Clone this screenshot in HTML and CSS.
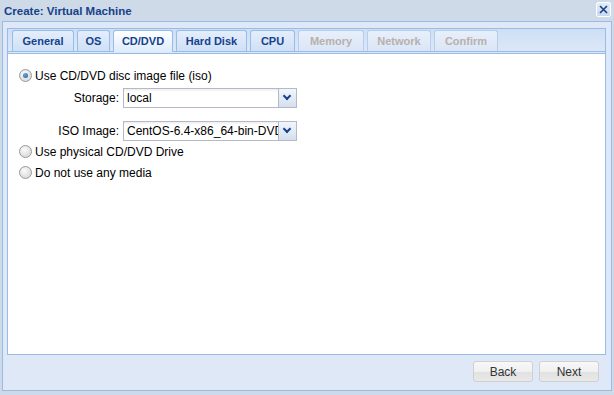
FILE: index.html
```html
<!DOCTYPE html>
<html lang="en">
<head>
    <meta charset="UTF-8">
    <title>Create: Virtual Machine</title>
    <link rel="stylesheet" href="styles.css">
</head>
<body>
    <div class="window">
        <div class="win-header">
            <span class="win-title">Create: Virtual Machine</span>
            <span class="tool-close">
                <svg width="13" height="13" viewBox="0 0 13 13">
                    <path d="M3 3 L10 10 M10 3 L3 10" stroke="#15428b" stroke-width="1.6" fill="none"/>
                </svg>
            </span>
        </div>

        <div class="win-body">
            <div class="tabpanel">
                <div class="tab-bar">
                    <div class="tab tab-general">General</div>
                    <div class="tab tab-os">OS</div>
                    <div class="tab tab-cd active">CD/DVD</div>
                    <div class="tab tab-disk">Hard Disk</div>
                    <div class="tab tab-cpu">CPU</div>
                    <div class="tab tab-mem disabled">Memory</div>
                    <div class="tab tab-net disabled">Network</div>
                    <div class="tab tab-confirm disabled">Confirm</div>
                </div>

                <div class="tab-body">
                    <div class="radio-row">
                        <span class="radio checked"></span>
                        <span>Use CD/DVD disc image file (iso)</span>
                    </div>
                    <div class="field-row">
                        <label>Storage:</label>
                        <div class="combo">
                            <span class="combo-text">local</span>
                            <span class="trigger"></span>
                        </div>
                    </div>
                    <div class="field-row">
                        <label>ISO Image:</label>
                        <div class="combo">
                            <span class="combo-text">CentOS-6.4-x86_64-bin-DVD1.iso</span>
                            <span class="trigger"></span>
                        </div>
                    </div>
                    <div class="radio-row">
                        <span class="radio"></span>
                        <span>Use physical CD/DVD Drive</span>
                    </div>
                    <div class="radio-row">
                        <span class="radio"></span>
                        <span>Do not use any media</span>
                    </div>
                </div>
            </div>

            <div class="toolbar">
                <button class="btn">Back</button>
                <button class="btn">Next</button>
            </div>
        </div>
    </div>
</body>
</html>
```

FILE: styles.css
```css
body {
    margin: 0;
    padding: 0;
    background-color: #cfdae8;
    font-family: "Liberation Sans", Arial, sans-serif;
    font-size: 12px;
    color: #000;
}

.window {
    width: 614px;
    height: 395px;
    background-color: #cfdae8;
}

.win-header {
    height: 21px;
    display: flex;
    align-items: center;
    justify-content: space-between;
    padding: 0 3px 0 4px;
}

.win-title {
    font-weight: bold;
    font-size: 11.5px;
    color: #15428b;
    margin-top: 1px;
}

.tool-close {
    width: 13px;
    height: 13px;
    border: 1px solid #fff;
    border-radius: 2px;
    background: linear-gradient(#e4ecf7, #c9d9ef);
    display: flex;
    margin-top: -2px;
}

.win-body {
    margin-left: 2px;
    width: 610px;
    height: 370px;
    box-sizing: border-box;
    border: 1px solid #99bbe8;
    background-color: #dfe8f6;
    padding: 6px 4px 0 4px;
}

.tabpanel {
    width: 599px;
}

.tab-bar {
    height: 26px;
    box-sizing: border-box;
    border: 1px solid #99bbe8;
    background: linear-gradient(#cedff5, #dce8f8);
    display: flex;
    align-items: flex-end;
    gap: 3px;
    padding: 2px 4px;
    position: relative;
}

.tab-bar::after {
    content: "";
    position: absolute;
    left: 0;
    right: 0;
    bottom: 1px;
    height: 1px;
    background: #99bbe8;
}

.tab {
    height: 21px;
    box-sizing: border-box;
    border: 1px solid #99bbe8;
    border-bottom: none;
    border-radius: 3px 3px 0 0;
    background: linear-gradient(#e4eefb, #cfe0f6);
    font-weight: bold;
    font-size: 11px;
    color: #15428b;
    padding-top: 4px;
    text-align: center;
    position: relative;
    z-index: 1;
}

.tab-general { width: 62px; }
.tab-os { width: 33px; }
.tab-cd { width: 60px; }
.tab-disk { width: 71px; }
.tab-cpu { width: 45px; }
.tab-mem { width: 66px; }
.tab-net { width: 64px; }
.tab-confirm { width: 64px; }

.tab.active {
    background: linear-gradient(#ffffff, #deecfd);
    height: 22px;
    margin-bottom: -1px;
}

.tab.disabled {
    color: #b8b0ad;
    background: linear-gradient(#e8effa, #dae6f6);
    border-color: #b8cceb;
}

.tab-body {
    height: 301px;
    box-sizing: border-box;
    border: 1px solid #99bbe8;
    border-top: none;
    background: #fff;
    padding: 11px 0 0 11px;
}

.radio-row {
    display: flex;
    align-items: center;
    height: 21px;
    gap: 3px;
}

.radio {
    width: 11px;
    height: 11px;
    border-radius: 50%;
    border: 1px solid #9a9a9a;
    background: radial-gradient(circle at 40% 35%, #fbfbfb, #cfcfcf);
    display: inline-block;
    position: relative;
}

.radio.checked::after {
    content: "";
    position: absolute;
    left: 3px;
    top: 3px;
    width: 5px;
    height: 5px;
    border-radius: 50%;
    background: radial-gradient(circle at 40% 35%, #6ea6d8, #1c5a9a);
}

.field-row {
    display: flex;
    align-items: center;
    height: 20px;
    margin: 2px 0;
}

.field-row + .field-row {
    margin: 13px 0 0 0;
}

.field-row label {
    width: 100px;
    text-align: right;
    padding-right: 4px;
}

.combo {
    width: 174px;
    height: 20px;
    box-sizing: border-box;
    border: 1px solid #b5b8c8;
    background: linear-gradient(#eeeeee, #ffffff 3px);
    display: flex;
    align-items: center;
}

.combo-text {
    flex: 1;
    min-width: 0;
    overflow: hidden;
    white-space: nowrap;
    padding-left: 3px;
}

.trigger {
    flex: none;
    width: 18px;
    height: 18px;
    box-sizing: border-box;
    border-left: 1px solid #b5b8c8;
    background: linear-gradient(#f2f6fb, #d4dfee);
    position: relative;
}

.trigger::after {
    content: "";
    position: absolute;
    left: 5px;
    top: 4px;
    width: 4px;
    height: 4px;
    border-right: 2px solid #15428b;
    border-bottom: 2px solid #15428b;
    transform: rotate(45deg);
}

.toolbar {
    display: flex;
    justify-content: flex-end;
    gap: 6px;
    padding: 6px 8px 0 0;
}

.btn {
    width: 60px;
    height: 21px;
    box-sizing: border-box;
    border: 1px solid #d0d0d0;
    border-radius: 3px;
    background: linear-gradient(#f8f8f8, #f0f0f0 50%, #e1e1e1 52%, #e9e9e9);
    font-family: "Liberation Sans", Arial, sans-serif;
    font-size: 12px;
    color: #333;
    padding: 0;
}
```
